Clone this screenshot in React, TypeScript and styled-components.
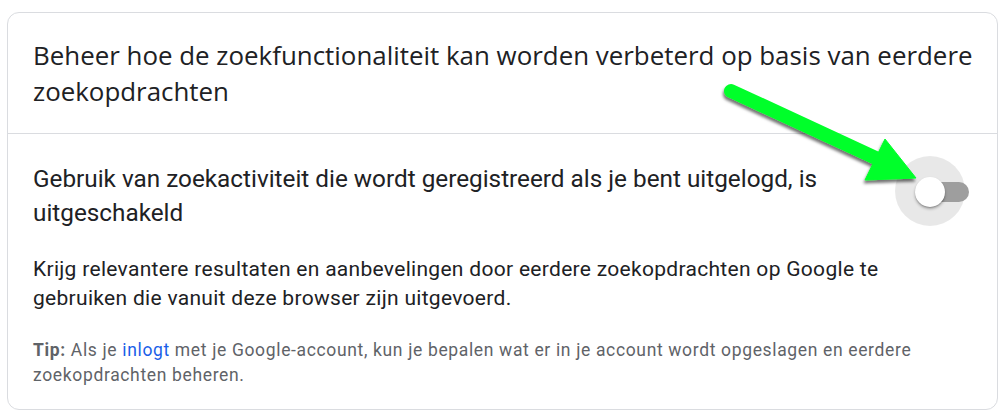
import React from "react";
import styled, { createGlobalStyle } from "styled-components";

const GlobalStyle = createGlobalStyle`
  html, body {
    margin: 0;
    padding: 0;
    background: #ffffff;
  }
  body {
    font-family: Roboto, "Liberation Sans", Arial, sans-serif;
    color: #202124;
  }
`;

const Page = styled.div`
  position: relative;
  width: 1005px;
  height: 413px;
  box-sizing: border-box;
  padding: 12px 7px 3px 7px;
`;

const Card = styled.section`
  box-sizing: border-box;
  height: 100%;
  border: 1px solid #dadce0;
  border-radius: 12px;
  background: #ffffff;
  display: flex;
  flex-direction: column;
`;

const CardHeader = styled.header`
  padding: 24px 16px 24px 25px;
  border-bottom: 1px solid #dadce0;
`;

const Title = styled.h2`
  margin: 0;
  font-family: "Open Sans", "Noto Sans", sans-serif;
  font-weight: 400;
  font-size: 25.9px;
  line-height: 36px;
  color: #202124;
`;

const CardBody = styled.div`
  padding: 28px 28px 0 25px;
  display: flex;
  flex-direction: column;
  gap: 25px;
`;

const SettingRow = styled.div`
  display: flex;
  align-items: flex-start;
  gap: 24px;
`;

const SettingLabel = styled.p`
  flex: 1;
  margin: 0;
  font-size: 24.3px;
  line-height: 34px;
  color: #202124;
`;

const Paragraph = styled.p<{ muted?: boolean }>`
  margin: 0;
  max-width: 920px;
  font-size: ${(p) => (p.muted ? "17.5px" : "21px")};
  letter-spacing: ${(p) => (p.muted ? "0.65px" : "0.3px")};
  line-height: ${(p) => (p.muted ? "25px" : "29px")};
  color: ${(p) => (p.muted ? "#5f6368" : "#202124")};
  b {
    font-weight: 700;
  }
`;

const Link = styled.a`
  color: #1a5ee8;
  text-decoration: none;
`;

const Switch = styled.button`
  position: relative;
  flex: none;
  width: 74px;
  height: 70px;
  margin-top: -6px;
  padding: 0;
  border: none;
  background: transparent;
  cursor: pointer;
`;

const Track = styled.span`
  position: absolute;
  left: 23px;
  top: 26px;
  width: 51px;
  height: 20px;
  border-radius: 10px;
  background: #9e9e9e;
`;

const Halo = styled.span`
  position: absolute;
  left: 0;
  top: 0;
  width: 70px;
  height: 70px;
  border-radius: 50%;
  background: rgba(0, 0, 0, 0.09);
`;

const Knob = styled.span`
  position: absolute;
  left: 20px;
  top: 21px;
  width: 30px;
  height: 30px;
  border-radius: 50%;
  background: #ffffff;
  box-shadow: 0 2px 3px rgba(0, 0, 0, 0.3), 0 1px 1px rgba(0, 0, 0, 0.14);
`;

const Annotation = styled.svg`
  position: absolute;
  left: 0;
  top: 0;
  pointer-events: none;
`;

const Arrow = () => (
  <Annotation width="1005" height="413" viewBox="0 0 1005 413">
    <defs>
      <filter id="arrowShadow" x="-20%" y="-20%" width="140%" height="160%">
        <feDropShadow dx="-1" dy="3" stdDeviation="1.8" floodColor="#000" floodOpacity="0.55" />
      </filter>
    </defs>
    <g filter="url(#arrowShadow)" fill="#00ff2a" stroke="#00ff2a">
      <line x1="731" y1="91" x2="878" y2="159" strokeWidth="14" strokeLinecap="round" />
      <polygon points="885,139 865,180 916,178" strokeWidth="1" strokeLinejoin="round" />
    </g>
  </Annotation>
);

export default function App() {
  return (
    <>
      <GlobalStyle />
      <Page>
        <Card>
          <CardHeader>
            <Title>
              Beheer hoe de zoekfunctionaliteit kan worden verbeterd op basis van eerdere
              zoekopdrachten
            </Title>
          </CardHeader>
          <CardBody>
            <SettingRow>
              <SettingLabel>
                Gebruik van zoekactiviteit die wordt geregistreerd als je bent uitgelogd, is
                uitgeschakeld
              </SettingLabel>
              <Switch role="switch" aria-checked={false}>
                <Halo />
                <Track />
                <Knob />
              </Switch>
            </SettingRow>
            <Paragraph>
              Krijg relevantere resultaten en aanbevelingen door eerdere zoekopdrachten op Google te
              gebruiken die vanuit deze browser zijn uitgevoerd.
            </Paragraph>
            <Paragraph muted>
              <b>Tip:</b> Als je <Link href="#">inlogt</Link> met je Google-account, kun je bepalen
              wat er in je account wordt opgeslagen en eerdere zoekopdrachten beheren.
            </Paragraph>
          </CardBody>
        </Card>
        <Arrow />
      </Page>
    </>
  );
}
